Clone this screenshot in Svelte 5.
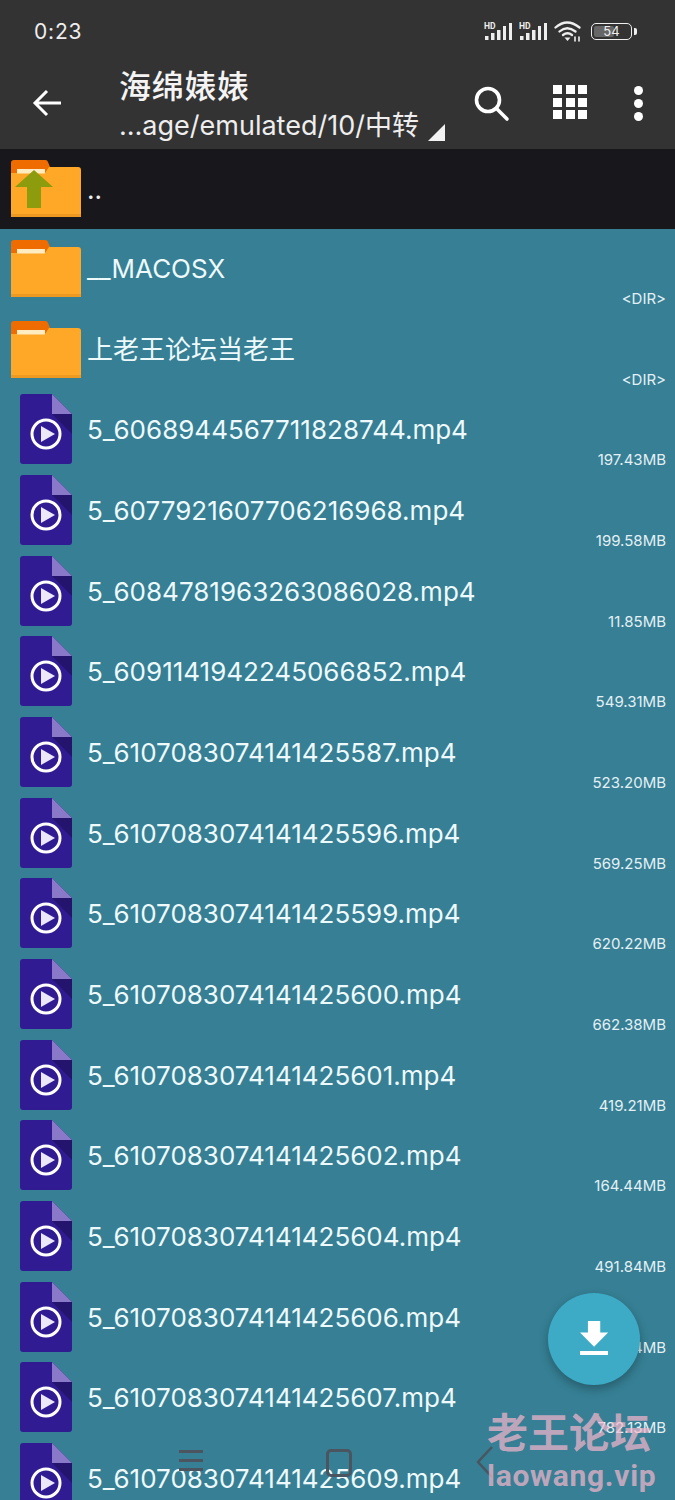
<script>
  const files = [
    ['5_6068944567711828744.mp4','197.43MB'],['5_6077921607706216968.mp4','199.58MB'],
    ['5_6084781963263086028.mp4','11.85MB'],['5_6091141942245066852.mp4','549.31MB'],
    ['5_6107083074141425587.mp4','523.20MB'],['5_6107083074141425596.mp4','569.25MB'],
    ['5_6107083074141425599.mp4','620.22MB'],['5_6107083074141425600.mp4','662.38MB'],
    ['5_6107083074141425601.mp4','419.21MB'],['5_6107083074141425602.mp4','164.44MB'],
    ['5_6107083074141425604.mp4','491.84MB'],['5_6107083074141425606.mp4','354.64MB'],
    ['5_6107083074141425607.mp4','782.13MB'],['5_6107083074141425609.mp4','']
  ];
  const folders = ['__MACOSX','上老王论坛当老王'];
</script>

{#snippet folder()}
  <svg class="folder" viewBox="0 0 70 57" width="70" height="57">
    <path d="M0 3a3 3 0 0 1 3-3h31a3 3 0 0 1 3 2l2 5v10H0z" fill="#ef6c00"/>
    <path d="M0 13H34l4-6h29a3 3 0 0 1 3 3v47H0z" fill="#ffa726"/>
    <rect x="6" y="9" width="28" height="4.5" fill="#ffecc0"/>
    <path d="M0 54h70v2a1 1 0 0 1-1 1H1a1 1 0 0 1-1-1z" fill="#ee9a22"/>
  </svg>
{/snippet}

{#snippet signal()}
  <svg width="30" height="20" viewBox="0 0 30 20" fill="#eee">
    <text x="0" y="7.5" font-size="8.5" font-weight="700" font-family="Roboto, sans-serif">HD</text>
    <rect x="1" y="15" width="3.5" height="4"/><rect x="7" y="12" width="3.5" height="7"/><rect x="13" y="9" width="3.5" height="10"/><rect x="19" y="5" width="3" height="14"/><rect x="25" y="2" width="3" height="17"/>
  </svg>
{/snippet}

<div class="phone">
  <header>
    <div class="status">
      <span class="time">0:23</span>
      <div class="status-icons">
        {@render signal()}
        {@render signal()}
        <svg width="28" height="22" viewBox="0 0 28 22" fill="none" stroke="#eee" stroke-width="2.3" stroke-linecap="round">
          <path d="M1.5 7.5Q13-2.5 25.5 7.5M5.5 11.5Q13 5 21.5 11.5M9 15Q13.5 11.5 18 15"/>
          <path d="M10.5 17.5h6l-3 3.5z" fill="#eee" stroke="none"/>
          <path d="M21 21v-4M25 21v-4" stroke-width="1.6"/>
        </svg>
        <div class="battery"><span class="level"></span><span class="pct">54</span></div>
        <span class="nub"></span>
      </div>
    </div>
    <div class="toolbar">
      <svg class="back" width="30" height="28" viewBox="0 0 30 28" fill="none" stroke="#fff" stroke-width="3">
        <path d="M29 14H4M15 2 3 14l12 12"/>
      </svg>
      <div class="titles">
        <div class="title">海绵婊婊</div>
        <div class="path">…age/emulated/10/中转</div>
      </div>
      <span class="corner"></span>
      <svg class="search" width="36" height="36" viewBox="0 0 36 36" fill="none" stroke="#fff" stroke-width="3.6">
        <circle cx="14" cy="14" r="11.5"/><path d="M22.5 22.5 33 33" stroke-linecap="round"/>
      </svg>
      <div class="grid">
        {#each Array(9) as _}<span></span>{/each}
      </div>
      <div class="dots"><span></span><span></span><span></span></div>
    </div>
  </header>

  <div class="up">
    <div class="up-icon">
      {@render folder()}
      <svg class="arrow" viewBox="0 0 38 38" width="38" height="38"><path d="M19 0 38 17H26v21H12V17H0z" fill="#8c9c0c"/></svg>
    </div>
    <span class="dotdot">..</span>
  </div>

  <main>
    {#each folders as f}
      <div class="row">
        <div class="icon-f">{@render folder()}</div>
        <div class="name">{f}</div>
        <div class="size">&lt;DIR&gt;</div>
      </div>
    {/each}
    {#each files as [n, s]}
      <div class="row">
        <div class="icon-v">
          <svg viewBox="0 0 52 70" width="52" height="70">
            <path d="M3 0h29l20 20v47a3 3 0 0 1-3 3H3a3 3 0 0 1-3-3V3a3 3 0 0 1 3-3z" fill="#311b92"/>
            <path d="M32 20h20v20z" fill="#24146e"/>
            <path d="M32 0l20 20H32z" fill="#8a78c8"/>
            <circle cx="26" cy="40" r="14" fill="none" stroke="#fff" stroke-width="3"/>
            <path d="M21 32l14 8-14 8z" fill="#ece8f8"/>
          </svg>
        </div>
        <div class="name">{n}</div>
        <div class="size">{s}</div>
      </div>
    {/each}
  </main>

  <div class="fab">
    <svg width="32" height="36" viewBox="0 0 32 36" fill="#fff">
      <path d="M9 0h14v12h9L16 27 0 12h9z" transform="translate(2 0) scale(.88 .95)"/>
      <rect x="2" y="30" width="28" height="4"/>
    </svg>
  </div>

  <div class="nav nav-menu"><span></span><span></span><span></span></div>
  <div class="nav nav-home"></div>
  <svg class="nav nav-back" width="18" height="34" viewBox="0 0 18 34" fill="none" stroke="#4a5560" stroke-width="2.5"><path d="M16 2 2 17l14 15"/></svg>

  <div class="mark">
    <div class="mark-cn">老王论坛</div>
    <div class="mark-en">laowang.vip</div>
  </div>
</div>

<style>
  :global(body) { margin: 0; }
  .phone {
    position: relative;
    width: 675px;
    height: 1500px;
    overflow: hidden;
    background: #367f94;
    font-family: Inter, "Noto Sans CJK SC", sans-serif;
    color: #fff;
  }
  header { height: 149px; background: #333333; display: flex; flex-direction: column; }
  .status {
    height: 62px;
    display: flex;
    justify-content: space-between;
    align-items: center;
    padding: 0 38px 0 34px;
  }
  .time { font-size: 21px; color: #eee; letter-spacing: 0.8px; }
  .status-icons { display: flex; align-items: center; gap: 5px; }
  .battery {
    position: relative;
    width: 39px;
    height: 15px;
    border: 1.5px solid #eee;
    border-radius: 5px;
    margin-left: 4px;
  }
  .level { position: absolute; left: 2px; top: 2px; bottom: 2px; width: 20px; background: #666; border-radius: 2px; }
  .pct { position: absolute; inset: 0; text-align: center; font-size: 13px; line-height: 15px; color: #eee; }
  .nub { width: 3px; height: 7px; background: #eee; border-radius: 0 2px 2px 0; margin-left: -3px; }
  .toolbar { position: relative; flex: 1; }
  .back { position: absolute; left: 32px; top: 27px; }
  .titles { position: absolute; left: 119px; top: 3px; }
  .title { font-size: 32px; line-height: 44px; font-weight: 500; color: #f4f4f4; letter-spacing: 0.7px; }
  .path { font-size: 27px; line-height: 34px; color: #eee; white-space: nowrap; }
  .corner {
    position: absolute;
    left: 428px;
    top: 62px;
    width: 0;
    height: 0;
    border-left: 17px solid transparent;
    border-bottom: 17px solid #f2f2f2;
  }
  .search { position: absolute; left: 474px; top: 24px; }
  .grid {
    position: absolute;
    left: 553px;
    top: 23px;
    display: grid;
    grid-template-columns: repeat(3, 9px);
    grid-auto-rows: 9px;
    gap: 3.5px;
  }
  .grid span { background: #fff; }
  .dots { position: absolute; left: 634px; top: 24px; display: flex; flex-direction: column; gap: 4px; }
  .dots span { width: 9px; height: 9px; border-radius: 50%; background: #fff; }
  .up { height: 80px; background: #18181c; position: relative; }
  .up-icon { position: absolute; left: 11px; top: 11px; }
  .arrow { position: absolute; left: 4px; top: 10px; }
  .dotdot { position: absolute; left: 87px; top: 25px; font-size: 26px; line-height: 32px; color: #eee; }
  .folder { display: block; }
  main { display: flex; flex-direction: column; }
  .row {
    position: relative;
    height: 80.67px;
    flex: none;
    box-sizing: border-box;
    display: grid;
    grid-template-columns: 87px 1fr;
    grid-template-rows: 60px 1fr;
  }
  .icon-f { grid-row: 1 / 3; padding: 11px 0 0 11px; }
  .icon-v { grid-row: 1 / 3; padding: 4px 0 0 20px; }
  .name { font-size: 26px; line-height: 32px; padding-top: 24px; color: #eef9fb; white-space: nowrap; }
  .size { font-size: 15px; line-height: 20px; padding-right: 9px; text-align: right; color: #e4f0f4; }
  .fab {
    position: absolute;
    left: 548px;
    top: 1293px;
    width: 92px;
    height: 92px;
    border-radius: 50%;
    background: #3dabc6;
    box-shadow: 0 4px 10px rgba(0, 0, 0, 0.28);
    display: flex;
    align-items: center;
    justify-content: center;
  }
  .nav { position: absolute; }
  .nav-menu { left: 179px; top: 1450px; display: flex; flex-direction: column; gap: 6px; }
  .nav-menu span { display: block; width: 24px; height: 3px; background: #4a5560; }
  .nav-home { left: 326px; top: 1449px; width: 20px; height: 22px; border: 3px solid #4a5560; border-radius: 5px; }
  .nav-back { left: 476px; top: 1445px; }
  .mark { position: absolute; left: 487px; top: 1410px; color: rgba(251, 185, 205, 0.7); font-weight: 700; font-family: Roboto, "Noto Sans CJK SC", sans-serif; }
  .mark-cn { font-size: 41px; line-height: 48px; }
  .mark-en { font-size: 30px; line-height: 36px; letter-spacing: 0.7px; }
</style>
